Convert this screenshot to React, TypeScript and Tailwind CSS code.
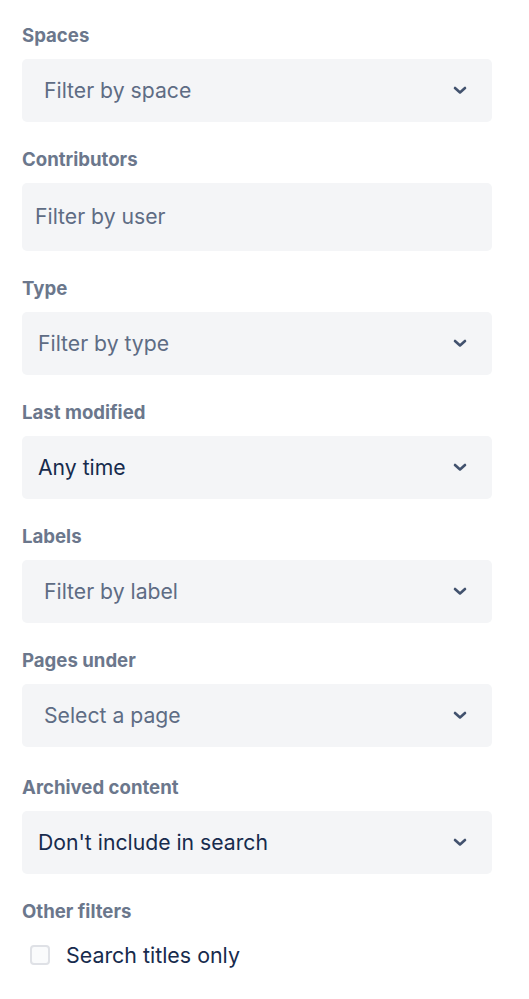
import React from "react";

function Chevron() {
  return (
    <svg width="14" height="9" viewBox="0 0 14 9" className="shrink-0">
      <path
        d="M2 2l5 4.5L12 2"
        fill="none"
        stroke="#42526e"
        strokeWidth="2.6"
        strokeLinecap="round"
        strokeLinejoin="round"
      />
    </svg>
  );
}

type Field = {
  label: string;
  text: string;
  pad: string;
  value?: boolean;
  select?: boolean;
  tall?: boolean;
  extra?: boolean;
};

const fields: Field[] = [
  { label: "Spaces", text: "Filter by space", pad: "pl-[22px]", select: true },
  { label: "Contributors", text: "Filter by user", pad: "pl-[13px]", tall: true },
  { label: "Type", text: "Filter by type", pad: "pl-4", select: true },
  { label: "Last modified", text: "Any time", pad: "pl-4", value: true, select: true },
  { label: "Labels", text: "Filter by label", pad: "pl-[22px]", select: true },
  { label: "Pages under", text: "Select a page", pad: "pl-[22px]", select: true },
  { label: "Archived content", text: "Don't include in search", pad: "pl-4", value: true, select: true, extra: true },
];

export default function App() {
  return (
    <div
      className="w-[529px] min-h-[999px] bg-white pt-[23px] pl-[22px] pr-[37px]"
      style={{ fontFamily: "Inter, 'Noto Sans', sans-serif" }}
    >
      <div className="flex flex-col gap-[25px]">
        {fields.map((f) => (
          <div key={f.label} className={f.extra ? "mt-[3px]" : ""}>
            <div className="text-[18.6px] leading-6 font-bold text-[#6b778c] mb-3">
              {f.label}
            </div>
            <div
              className={
                "flex items-center justify-between bg-[#f4f5f7] rounded-[5px] pr-[25px] " +
                f.pad +
                (f.tall ? " h-[68px]" : " h-[63px]")
              }
            >
              <span
                className={
                  "text-[21.2px] " + (f.value ? "text-[#172b4d]" : "text-[#5e6c84]")
                }
              >
                {f.text}
              </span>
              {f.select && <Chevron />}
            </div>
          </div>
        ))}
        <div>
          <div className="text-[18.6px] leading-6 font-bold text-[#6b778c] mb-4">
            Other filters
          </div>
          <label className="flex items-center gap-4 pl-2">
            <span className="w-5 h-5 rounded-[4px] border-2 border-[#dfe1e6] bg-[#fafbfc]" />
            <span className="text-[21.4px] text-[#172b4d]">Search titles only</span>
          </label>
        </div>
      </div>
    </div>
  );
}
